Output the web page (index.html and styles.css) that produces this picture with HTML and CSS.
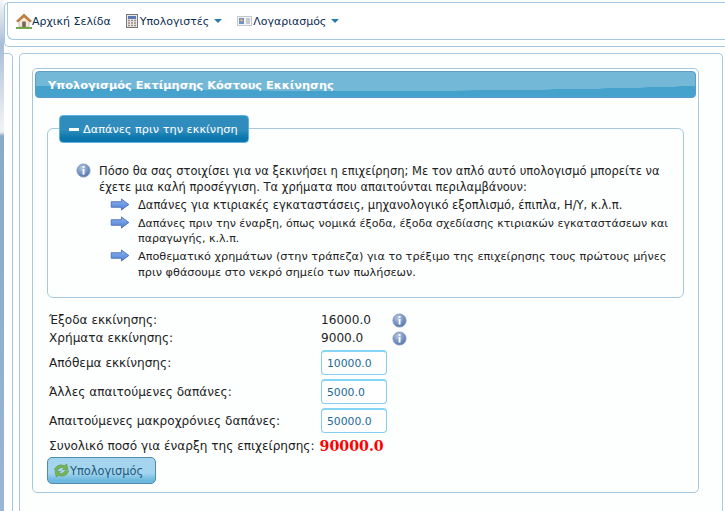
FILE: index.html
```html
<!DOCTYPE html>
<html>
<head>
    <title>Υπολογισμός Κόστους Εκκίνησης</title>
    <link rel="stylesheet" href="styles.css">
</head>
<body>
    <div class="top-box">
        <div class="menu">
            <a class="menu-item">
                <svg width="16" height="16" viewBox="0 0 16 16">
                    <path d="M3 8 V14 H13 V8 L8 3.5 Z" fill="#f4ead6" stroke="#a89a80" stroke-width="0.5"/>
                    <path d="M0.5 8 L8 1 L15.5 8 L14 9 L8 3.8 L2 9 Z" fill="#c98238" stroke="#8d5a28" stroke-width="0.6"/>
                    <rect x="6.2" y="8.5" width="3.6" height="5.5" fill="#75675a"/>
                    <path d="M0 14 H16 V16 H0 Z" fill="#6ea84a"/>
                </svg>Αρχική Σελίδα
            </a>
            <a class="menu-item">
                <svg class="calc-icon" width="12" height="14" viewBox="0 0 12 14">
                    <rect x="0.5" y="0.5" width="11" height="13" fill="#e9e9e9" stroke="#777"/>
                    <rect x="2" y="2" width="8" height="3" fill="#5b79b0"/>
                    <path d="M2 6.5 H10 M2 9 H10 M2 11.5 H10" stroke="#a08a80" stroke-width="1.4" stroke-dasharray="2 1"/>
                </svg>Υπολογιστές<span class="caret"></span>
            </a>
            <a class="menu-item">
                <svg class="card-icon" width="15" height="10" viewBox="0 0 15 10">
                    <rect x="0.5" y="0.5" width="14" height="9" fill="#f4f4f6" stroke="#c4c6d0"/>
                    <rect x="2" y="2" width="5" height="6" fill="#6f93c8"/>
                    <circle cx="4.5" cy="4.2" r="1.3" fill="#e8b06a"/>
                    <path d="M9 3 H13 M9 5 H13 M9 7 H13" stroke="#9aa0b0"/>
                </svg>Λογαριασμός<span class="caret"></span>
            </a>
        </div>
    </div>

    <div class="columns">
        <div class="side-box"></div>
        <div class="main-box">
            <div class="panel">
                <div class="panel-header">Υπολογισμός Εκτίμησης Κόστους Εκκίνησης</div>

                <div class="group">
                    <div class="legend"><span class="minus"></span>Δαπάνες πριν την εκκίνηση</div>
                    <div class="intro">
                        <svg class="info" width="15" height="15" viewBox="0 0 15 15"><use href="#info-icon"/></svg>
                        <div>
                            Πόσο θα σας στοιχίσει για να ξεκινήσει η επιχείρηση; Με τον απλό αυτό υπολογισμό μπορείτε να
                            έχετε μια καλή προσέγγιση. Τα χρήματα που απαιτούνται περιλαμβάνουν:
                            <div class="bullet"><svg width="21" height="13" viewBox="0 0 22 14"><use href="#arrow-icon"/></svg><div>Δαπάνες για κτιριακές εγκαταστάσεις, μηχανολογικό εξοπλισμό, έπιπλα, Η/Υ, κ.λ.π.</div></div>
                            <div class="bullet bullet-small"><svg width="21" height="13" viewBox="0 0 22 14"><use href="#arrow-icon"/></svg><div>Δαπάνες πριν την έναρξη, όπως νομικά έξοδα, έξοδα σχεδίασης κτιριακών εγκαταστάσεων και παραγωγής, κ.λ.π.</div></div>
                            <div class="bullet bullet-medium"><svg width="21" height="13" viewBox="0 0 22 14"><use href="#arrow-icon"/></svg><div>Αποθεματικό χρημάτων (στην τράπεζα) για το τρέξιμο της επιχείρησης τους πρώτους μήνες πριν φθάσουμε στο νεκρό σημείο των πωλήσεων.</div></div>
                        </div>
                    </div>
                </div>

                <div class="form">
                    <div class="row row-text"><span class="label">Έξοδα εκκίνησης:</span><span class="value">16000.0</span><svg width="15" height="15" viewBox="0 0 15 15"><use href="#info-icon"/></svg></div>
                    <div class="row row-text"><span class="label">Χρήματα εκκίνησης:</span><span class="value">9000.0</span><svg width="15" height="15" viewBox="0 0 15 15"><use href="#info-icon"/></svg></div>
                    <div class="row row-input"><span class="label">Απόθεμα εκκίνησης:</span><input class="field" value="10000.0"></div>
                    <div class="row row-input"><span class="label">Άλλες απαιτούμενες δαπάνες:</span><input class="field" value="5000.0"></div>
                    <div class="row row-input"><span class="label">Απαιτούμενες μακροχρόνιες δαπάνες:</span><input class="field" value="50000.0"></div>
                    <div class="row total"><span>Συνολικό ποσό για έναρξη της επιχείρησης:</span><strong>90000.0</strong></div>
                    <button class="calc">
                        <svg width="17" height="15" viewBox="0 0 18 16">
                            <path d="M1.5 7.5 C2.5 3 8 0.5 12 3 L14.5 1 L16 7 H10 L12 5.2 C9.5 4 6 5 5 8 Z" fill="#78b652" stroke="#4d8a34" stroke-width="0.5"/>
                            <path d="M16.5 8.5 C15.5 13 10 15.5 6 13 L3.5 15 L2 9 H8 L6 10.8 C8.5 12 12 11 13 8 Z" fill="#78b652" stroke="#4d8a34" stroke-width="0.5"/>
                        </svg>Υπολογισμός
                    </button>
                </div>
            </div>
        </div>
    </div>

    <svg class="defs" width="0" height="0">
        <defs>
            <radialGradient id="info-fill" cx="40%" cy="30%" r="75%">
                <stop offset="0" stop-color="#b5c8e4"/>
                <stop offset="1" stop-color="#4c6ea8"/>
            </radialGradient>
            <linearGradient id="arrow-fill" x1="0" y1="0" x2="0" y2="1">
                <stop offset="0" stop-color="#8db4ee"/>
                <stop offset="1" stop-color="#4d80d8"/>
            </linearGradient>
            <g id="info-icon">
                <circle cx="7.5" cy="7.5" r="6.6" fill="url(#info-fill)" stroke="#8b9fc0" stroke-width="0.9"/>
                <rect x="6.6" y="3" width="1.9" height="1.9" fill="#fff"/>
                <rect x="6.6" y="6" width="1.9" height="5.6" fill="#fff"/>
            </g>
            <path id="arrow-icon" d="M1 4 H12 V1 L20 7 L12 13 V10 H1 Z" fill="url(#arrow-fill)" stroke="#3a5ea8" stroke-width="0.8"/>
        </defs>
    </svg>
</body>
</html>
```

FILE: styles.css
```css
body {
    margin: 0;
    height: 511px;
    overflow: hidden;
    box-sizing: border-box;
    padding: 2px 0 0 4px;
    background: linear-gradient(#f4f6f9 0, #c4d2e4 30px, #a8bcd8 45px, #c0cede 70px, #eef2f6 125px, #eef0f2 132px, #8aa8c8 136px, #9ab5d5 100%) no-repeat 0 0 / 4px 100%, #fff;
    font-family: "DejaVu Sans", Verdana, sans-serif;
    font-size: 12.1px;
    color: #222;
}

.top-box {
    height: 45px;
    box-sizing: border-box;
    border: 1px solid #a6c9e2;
    border-right: 0;
    border-radius: 5px 0 0 5px;
    padding: 0 0 0 2px;
    margin-bottom: 6px;
}

.menu {
    height: 37px;
    box-sizing: border-box;
    border: 1px solid #a6c9e2;
    border-top: 0;
    border-right: 0;
    border-radius: 0 0 0 6px;
    display: flex;
    align-items: center;
    padding: 0 0 0 8px;
    font-size: 11px;
    color: #0b2c52;
}

.menu-item {
    display: flex;
    align-items: center;
    margin-right: 15px;
}

.calc-icon {
    margin-right: 2px;
}

.card-icon {
    margin-right: 1px;
}

.caret {
    width: 0;
    height: 0;
    border-left: 4px solid transparent;
    border-right: 4px solid transparent;
    border-top: 4px solid #2a7ab0;
    margin-left: 5px;
}

.columns {
    display: flex;
    height: 470px;
    gap: 6px;
}

.side-box {
    width: 8px;
    border: 1px solid #a6c9e2;
    border-bottom: 0;
    border-left: 0;
    border-radius: 0 5px 0 0;
}

.main-box {
    width: 704px;
    box-sizing: border-box;
    border: 1px solid #a6c9e2;
    border-bottom: 0;
    border-radius: 5px 5px 0 0;
    background: #fdfefe;
    padding: 14px 0 0 12px;
}

.panel {
    width: 667px;
    height: 425px;
    box-sizing: border-box;
    border: 1px solid #a6c9e2;
    border-radius: 5px;
    padding: 2px 2px 0;
}

.panel-header {
    height: 27px;
    box-sizing: border-box;
    border: 1px solid #5b9ccb;
    border-radius: 4px;
    background: radial-gradient(ellipse 488px 19px at 50% 0, #74b8d8 99%, transparent 100%), #45a2cc;
    color: #fff;
    font-weight: bold;
    font-size: 11.35px;
    line-height: 26px;
    padding-left: 12px;
}

.group {
    position: relative;
    margin: 30px 12px 0;
    height: 170px;
    box-sizing: border-box;
    border: 1px solid #a6c9e2;
    border-radius: 6px;
    padding: 35px 12px 0 28px;
    font-size: 11.5px;
}

.legend {
    position: absolute;
    left: 11px;
    top: -14px;
    width: 190px;
    height: 28px;
    box-sizing: border-box;
    border: 1px solid #5db4e0;
    border-radius: 4px;
    background: linear-gradient(#2f8cbc 0, #2f8cbc 55%, #0a76ab 85%, #0a76ab 100%);
    color: #fff;
    font-size: 11.3px;
    padding-left: 9px;
    display: flex;
    align-items: center;
}

.minus {
    width: 10px;
    height: 3px;
    background: #fff;
    margin-right: 4px;
}

.intro {
    display: flex;
    line-height: 15.5px;
}

.info {
    flex: none;
    margin: -1px 8px 0 0;
}

.bullet {
    display: flex;
    margin: 2.5px 0 0 11px;
}

.bullet svg {
    flex: none;
    margin-right: 7px;
}

.bullet-small {
    font-size: 11.05px;
}

.bullet-medium {
    font-size: 11.25px;
}

.form {
    margin: 13px 0 0 14px;
}

.row {
    display: flex;
    align-items: center;
}

.label {
    width: 272px;
}

.row-text {
    height: 18px;
}

.row-text + .row-input {
    margin-top: 1px;
}

.row-input {
    height: 29px;
}

.value {
    width: 71px;
}

.field {
    width: 66px;
    height: 25px;
    box-sizing: border-box;
    border: 1px solid #84cef2;
    border-top: 2px solid #84d4f6;
    border-radius: 4px;
    padding: 0 0 0 5px;
    font-family: inherit;
    font-size: 10.8px;
    color: #1a6a96;
    background: #fff;
}

.total {
    height: 21px;
}

.total strong {
    font-family: "DejaVu Serif", serif;
    font-size: 14.2px;
    color: #f00;
    margin-left: 5px;
}

.calc {
    display: flex;
    align-items: center;
    width: 109px;
    height: 27px;
    margin: 1px 0 0 -2px;
    padding: 0 0 0 5px;
    box-sizing: border-box;
    border: 1px solid #4d8cab;
    border-radius: 5px;
    background: linear-gradient(#a4d4ee 0, #a4d4ee 60%, #6cb8de 90%, #6cb8de 100%);
    font-family: inherit;
    font-size: 11.4px;
    color: #205a7a;
}

.defs {
    position: absolute;
}
```
